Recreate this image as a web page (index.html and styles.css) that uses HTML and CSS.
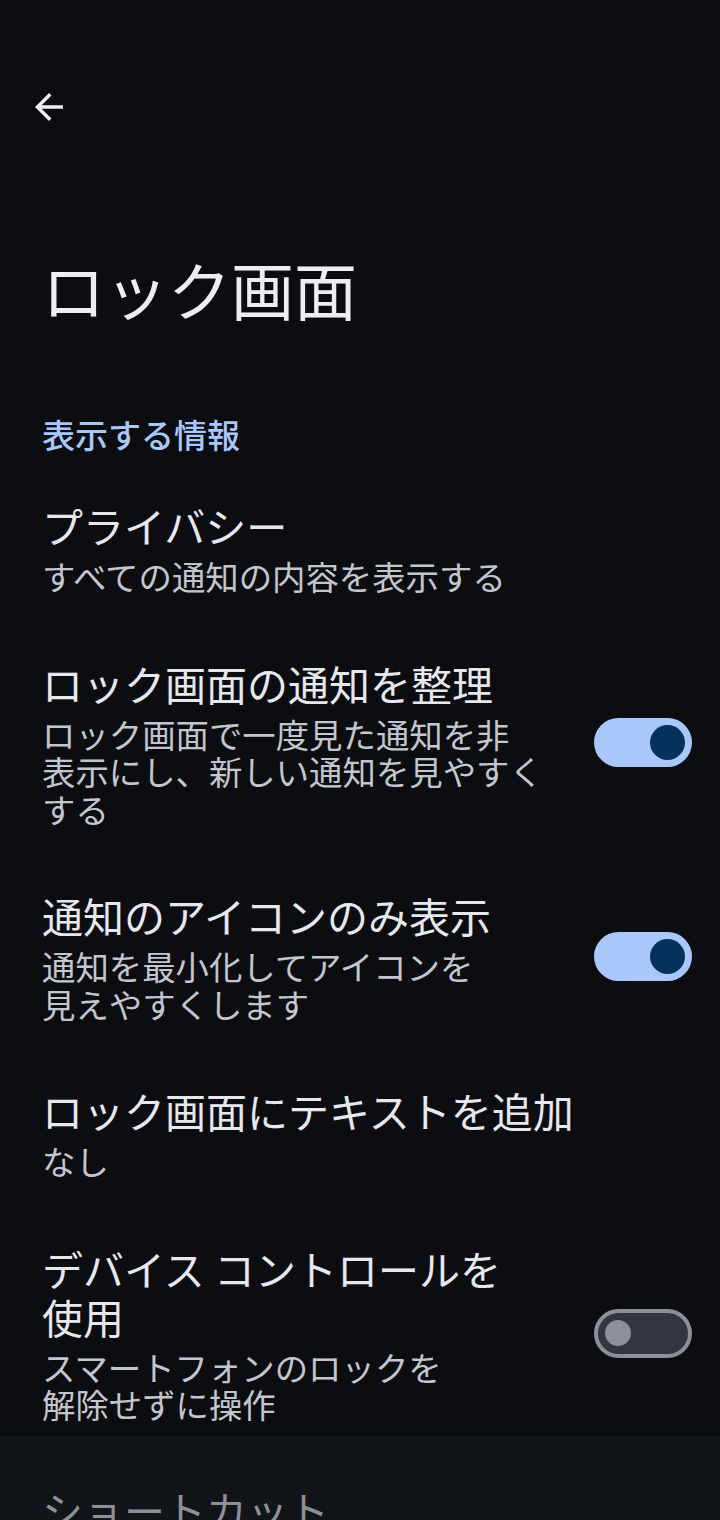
FILE: index.html
```html
<!doctype html>
<html lang="ja">
<head>
  <meta charset="UTF-8">
  <meta name="viewport" content="width=device-width, initial-scale=1">
  <title>ロック画面</title>
  <link rel="stylesheet" href="styles.css">
</head>
<body>

  <div class="appbar">
    <button class="back" type="button" aria-label="戻る">
      <svg viewBox="0 0 24 24" width="42" height="42"><path d="M20 11H7.83l5.59-5.59L12 4l-8 8 8 8 1.41-1.41L7.83 13H20v-2z"/></svg>
    </button>
  </div>

  <h1 class="pageTitle">ロック画面</h1>

  <h2 class="category">表示する情報</h2>

  <div class="pref">
    <div class="prefText">
      <p class="prefTitle">プライバシー</p>
      <p class="prefSummary">すべての通知の内容を表示する</p>
    </div>
  </div>

  <div class="pref">
    <div class="prefText">
      <p class="prefTitle">ロック画面の通知を整理</p>
      <p class="prefSummary">ロック画面で一度見た通知を非<br>表示にし、新しい通知を見やすく<br>する</p>
    </div>
    <span class="switch on"><span class="thumb"></span></span>
  </div>

  <div class="pref">
    <div class="prefText">
      <p class="prefTitle">通知のアイコンのみ表示</p>
      <p class="prefSummary">通知を最小化してアイコンを<br>見えやすくします</p>
    </div>
    <span class="switch on"><span class="thumb"></span></span>
  </div>

  <div class="pref">
    <div class="prefText">
      <p class="prefTitle">ロック画面にテキストを追加</p>
      <p class="prefSummary">なし</p>
    </div>
  </div>

  <div class="pref last">
    <div class="prefText">
      <p class="prefTitle">デバイス コントロールを<br>使用</p>
      <p class="prefSummary">スマートフォンのロックを<br>解除せずに操作</p>
    </div>
    <span class="switch"><span class="thumb"></span></span>
  </div>

  <div class="nextSection">
    <p class="prefTitle dim">ショートカット</p>
  </div>

</body>
</html>
```

FILE: styles.css
```css
html, body {
  height: 100%;
}
body {
  margin: 0;
  overflow: hidden;
  color: #e6e8ee;
  background: #0c0d10;
  font-family: "Noto Sans CJK JP", "Noto Sans", sans-serif;
}
p, h1, h2 {
  margin: 0;
}

.appbar {
  padding: 86px 0 0 28px;
}
.back {
  display: block;
  width: 42px;
  height: 42px;
  padding: 0;
  border: 0;
  background: none;
}
.back svg {
  display: block;
  fill: #eef0f6;
}

.pageTitle {
  margin-top: 120px;
  padding-left: 42px;
  font-size: 63px;
  line-height: 80px;
  font-weight: 400;
  color: #eceef4;
}

.category {
  margin-top: 86px;
  padding-left: 42px;
  font-size: 33px;
  line-height: 40px;
  font-weight: 500;
  color: #a8c7fa;
}
.category + .pref {
  margin-top: 15px;
}

.pref {
  display: flex;
  align-items: center;
  padding: 32px 28px 32px 42px;
}
.pref.last {
  padding-bottom: 13px;
}
.prefText {
  flex: 1;
  display: flex;
  flex-direction: column;
  gap: 8px;
}
.prefTitle {
  font-size: 41px;
  line-height: 48px;
  color: #e6e8ee;
}
.prefSummary {
  font-size: 33.4px;
  line-height: 37.5px;
  color: #c3c6cf;
}

.switch {
  position: relative;
  flex: none;
  box-sizing: border-box;
  width: 98px;
  height: 49px;
  margin-left: 24px;
  border-radius: 25px;
  border: 4px solid #8e9099;
  background: #33363c;
}
.switch .thumb {
  position: absolute;
  top: 7.5px;
  left: 7px;
  width: 26px;
  height: 26px;
  border-radius: 50%;
  background: #8e9099;
}
.switch.on {
  border: 0;
  background: #a8c8fb;
}
.switch.on .thumb {
  top: 7px;
  left: auto;
  right: 7px;
  width: 35px;
  height: 35px;
  background: #04325a;
}

.nextSection {
  min-height: 200px;
  padding: 49px 28px 0 42px;
  background: #111418;
}
.prefTitle.dim {
  color: #8d9097;
}
```
